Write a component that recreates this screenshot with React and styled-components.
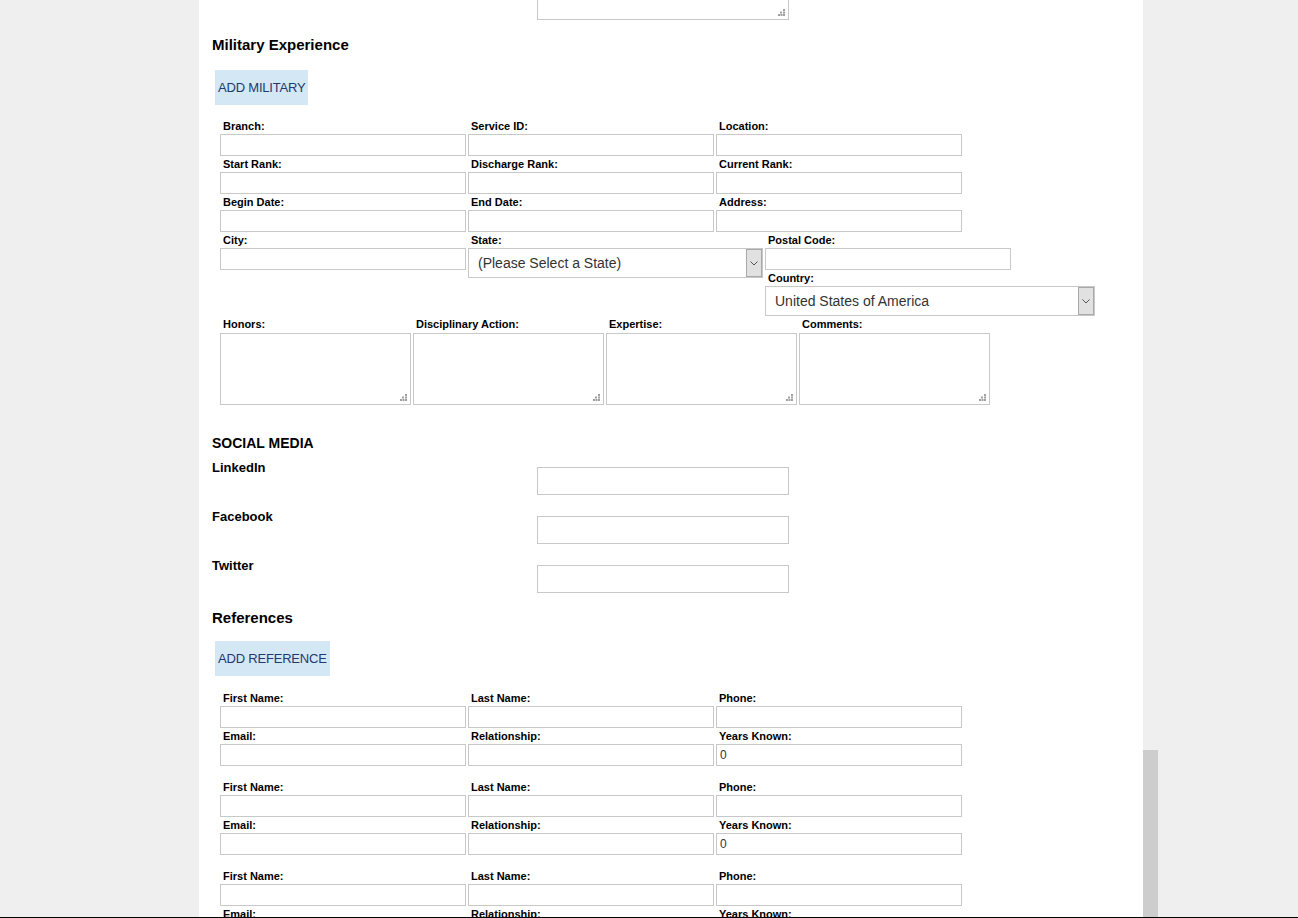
import React from "react";
import styled, { createGlobalStyle } from "styled-components";

const Global = createGlobalStyle`
  html, body { margin: 0; padding: 0; background: #efefef; }
  body { font-family: "Liberation Sans", Arial, sans-serif; color: #000; overflow: hidden; }
`;

const Page = styled.div`
  width: 944px;
  margin-left: 199px;
  background: #fff;
  min-height: 918px;
  padding: 0 0 0 13px;
  box-sizing: border-box;
`;

const TopRow = styled.div`
  display: flex;
  padding-left: 325px;
`;

const TopArea = styled.div`
  position: relative;
  width: 252px;
  height: 20px;
  box-sizing: border-box;
  border: 1px solid #c8c8c8;
  border-top: none;
`;

const Heading = styled.h2`
  margin: ${(p) => p.$mt || 0}px 0 0 0;
  font-size: ${(p) => p.$size || 15}px;
  line-height: 18px;
  font-weight: bold;
  text-transform: ${(p) => (p.$upper ? "uppercase" : "none")};
`;

const AddButton = styled.button`
  display: block;
  margin: ${(p) => p.$mt}px 0 0 3px;
  height: 35px;
  padding: 0 3px;
  border: none;
  background: #d3e7f4;
  color: #23386f;
  font-family: "Liberation Sans", Arial, sans-serif;
  font-size: 13px;
  letter-spacing: -0.2px;
  cursor: pointer;
`;

const Fields = styled.div`
  margin: ${(p) => p.$mt}px 0 0 8px;
  display: flex;
  flex-direction: column;
`;

const Row = styled.div`
  display: flex;
  gap: 2px;
  align-items: flex-start;
`;

const Field = styled.div`
  display: flex;
  flex-direction: column;
  width: ${(p) => p.$w || 246}px;
`;

const Label = styled.label`
  display: block;
  height: 16px;
  line-height: 16px;
  padding-left: 3px;
  font-size: 11px;
  font-weight: bold;
  white-space: nowrap;
`;

const Input = styled.input`
  box-sizing: border-box;
  width: 100%;
  height: 22px;
  margin: 0;
  border: 1px solid #c8c8c8;
  padding: 0 3px;
  font-family: "Liberation Sans", Arial, sans-serif;
  font-size: 12px;
  color: #333;
  outline: none;
`;

const SelectWrap = styled.div`
  position: relative;
  width: 100%;
  height: 30px;
`;

const Select = styled.select`
  appearance: none;
  box-sizing: border-box;
  width: 100%;
  height: 30px;
  margin: 0;
  border: 1px solid #c8c8c8;
  background: #fff;
  padding: 0 0 0 9px;
  font-family: "Liberation Sans", Arial, sans-serif;
  font-size: 14px;
  color: #333;
  outline: none;
`;

const Arrow = styled.span`
  position: absolute;
  right: 1px;
  top: 1px;
  bottom: 1px;
  width: 16px;
  box-sizing: border-box;
  border: 1px solid #a9a9a9;
  background: #e1e1e1;
  display: flex;
  align-items: center;
  justify-content: center;
  pointer-events: none;
`;

const Stack = styled.div`
  display: flex;
  flex-direction: column;
`;

const AreaRow = styled.div`
  display: flex;
  gap: 2px;
`;

const AreaField = styled.div`
  display: flex;
  flex-direction: column;
  width: 191px;
`;

const AreaLabel = styled(Label)`
  height: 17px;
  line-height: 17px;
`;

const AreaBox = styled.div`
  position: relative;
  height: 72px;
  box-sizing: border-box;
  border: 1px solid #c8c8c8;
`;

const Textarea = styled.textarea`
  display: block;
  box-sizing: border-box;
  width: 100%;
  height: 100%;
  border: none;
  resize: none;
  outline: none;
  margin: 0;
`;

const GripSvg = styled.svg`
  position: absolute;
  right: 3px;
  bottom: 3px;
`;

const Grip = () => (
  <GripSvg width="7" height="7" viewBox="0 0 7 7">
    <g fill="#a0a0a0">
      <rect x="5" y="0" width="2" height="2" />
      <rect x="2" y="2.5" width="2" height="2" />
      <rect x="5" y="2.5" width="2" height="2" />
      <rect x="0" y="5" width="2" height="2" />
      <rect x="2.5" y="5" width="2" height="2" />
      <rect x="5" y="5" width="2" height="2" />
    </g>
  </GripSvg>
);

const Social = styled.div`
  margin-top: 8px;
  display: flex;
  flex-direction: column;
`;

const SocialRow = styled.div`
  display: flex;
  height: 49px;
  align-items: flex-start;
`;

const SocialLabel = styled.div`
  width: 325px;
  font-size: 13px;
  font-weight: bold;
  line-height: 16px;
`;

const SocialInput = styled.input`
  box-sizing: border-box;
  width: 252px;
  height: 28px;
  margin: 7px 0 0 0;
  border: 1px solid #c8c8c8;
  outline: none;
`;

const RefGroup = styled.div`
  display: flex;
  flex-direction: column;
  margin-top: ${(p) => p.$mt}px;
`;

const Thumb = styled.div`
  position: fixed;
  left: 1143px;
  top: 750px;
  width: 15px;
  height: 168px;
  background: #cdcdcd;
`;

const BottomLine = styled.div`
  position: fixed;
  left: 0;
  right: 0;
  bottom: 0;
  height: 1px;
  background: #000;
`;

const Chevron = () => (
  <svg width="8" height="5" viewBox="0 0 8 5">
    <path d="M0.5 0.5 L4 4 L7.5 0.5" fill="none" stroke="#555" strokeWidth="1" />
  </svg>
);

const Dropdown = ({ value }) => (
  <SelectWrap>
    <Select defaultValue={value}>
      <option>{value}</option>
    </Select>
    <Arrow>
      <Chevron />
    </Arrow>
  </SelectWrap>
);

const TextField = ({ label, value, w }) => (
  <Field $w={w}>
    <Label>{label}</Label>
    <Input defaultValue={value} />
  </Field>
);

const RefBlock = ({ mt }) => (
  <RefGroup $mt={mt}>
    <Row>
      <TextField label="First Name:" />
      <TextField label="Last Name:" />
      <TextField label="Phone:" />
    </Row>
    <Row>
      <TextField label="Email:" />
      <TextField label="Relationship:" />
      <TextField label="Years Known:" value="0" />
    </Row>
  </RefGroup>
);

export default function App() {
  return (
    <>
      <Global />
      <Page>
        <TopRow>
          <TopArea>
            <Grip />
          </TopArea>
        </TopRow>

        <Heading $mt={16}>Military Experience</Heading>
        <AddButton $mt={16}>ADD MILITARY</AddButton>

        <Fields $mt={13}>
          <Row>
            <TextField label="Branch:" />
            <TextField label="Service ID:" />
            <TextField label="Location:" />
          </Row>
          <Row>
            <TextField label="Start Rank:" />
            <TextField label="Discharge Rank:" />
            <TextField label="Current Rank:" />
          </Row>
          <Row>
            <TextField label="Begin Date:" />
            <TextField label="End Date:" />
            <TextField label="Address:" />
          </Row>
          <Row>
            <TextField label="City:" />
            <Field $w={295}>
              <Label>State:</Label>
              <Dropdown value="(Please Select a State)" />
            </Field>
            <Stack>
              <TextField label="Postal Code:" />
              <Field $w={330}>
                <Label>Country:</Label>
                <Dropdown value="United States of America" />
              </Field>
            </Stack>
          </Row>
          <AreaRow>
            {["Honors:", "Disciplinary Action:", "Expertise:", "Comments:"].map((l) => (
              <AreaField key={l}>
                <AreaLabel>{l}</AreaLabel>
                <AreaBox>
                  <Textarea />
                  <Grip />
                </AreaBox>
              </AreaField>
            ))}
          </AreaRow>
        </Fields>

        <Heading $mt={29} $size={14} $upper>
          Social Media
        </Heading>
        <Social>
          {["LinkedIn", "Facebook", "Twitter"].map((n) => (
            <SocialRow key={n}>
              <SocialLabel>{n}</SocialLabel>
              <SocialInput />
            </SocialRow>
          ))}
        </Social>

        <Heading $mt={2}>References</Heading>
        <AddButton $mt={14}>ADD REFERENCE</AddButton>
        <Fields $mt={14}>
          <RefBlock mt={0} />
          <RefBlock mt={13} />
          <RefBlock mt={13} />
        </Fields>
      </Page>
      <Thumb />
      <BottomLine />
    </>
  );
}
